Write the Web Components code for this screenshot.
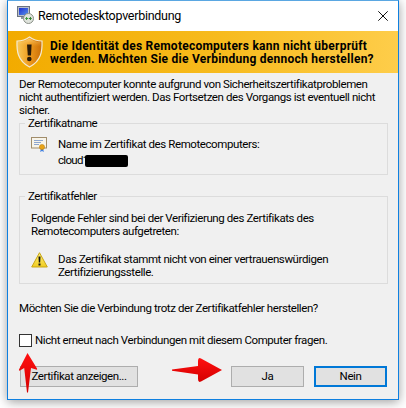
<!DOCTYPE html>
<html><head><meta charset="utf-8"><style>
html,body{margin:0;padding:0;background:#fff}
body{width:406px;height:408px;overflow:hidden;font:11.5px/13px Roboto,sans-serif;letter-spacing:-.41px;color:#000;white-space:nowrap}
</style></head><body>
<rd-dialog>
<span slot="title">Remotedesktopverbindung</span>
<rd-banner>Die Identität des Remotecomputers kann nicht überprüft<br>werden. Möchten Sie die Verbindung dennoch herstellen?</rd-banner>
<rd-text class="intro">Der Remotecomputer konnte aufgrund von Sicherheitszertifikatproblemen<br>nicht authentifiziert werden. Das Fortsetzen des Vorgangs ist eventuell nicht<br>sicher.</rd-text>
<rd-group label="Zertifikatname" h="58">
<rd-iconrow icon="cert">Name im Zertifikat des Remotecomputers:<br><rd-host>cloud1<rd-redact></rd-redact></rd-host></rd-iconrow>
</rd-group>
<rd-group label="Zertifikatfehler" h="94" style="margin-top:15px">
<rd-text style="margin-top:9px">Folgende Fehler sind bei der Verifizierung des Zertifikats des<br>Remotecomputers aufgetreten:</rd-text>
<rd-iconrow icon="warn" style="margin-top:13px">Das Zertifikat stammt nicht von einer vertrauenswürdigen<br>Zertifizierungsstelle.</rd-iconrow>
</rd-group>
<rd-text class="q">Möchten Sie die Verbindung trotz der Zertifikatfehler herstellen?</rd-text>
<rd-check>Nicht erneut nach Verbindungen mit diesem Computer fragen.</rd-check>
<rd-footer>
<rd-button w="118">Zertifikat anzeigen...</rd-button>
<rd-button w="73" style="margin-left:auto">Ja</rd-button>
<rd-button w="73" primary style="margin-left:10px">Nein</rd-button>
</rd-footer>
</rd-dialog>
<script>
const def=(n,css,html)=>{customElements.define(n,class extends HTMLElement{connectedCallback(){
 if(this.shadowRoot)return;const s=this.attachShadow({mode:'open'});
 s.innerHTML='<style>'+css+'</style>'+(typeof html==='function'?html(this):html);}})};
def('rd-dialog',`
:host{display:block;position:relative;width:406px;height:408px}
.win{position:absolute;left:7px;top:0;width:390px;height:398px;border:1px solid #0f80e0;border-top-color:#5aa7e2;background:#f0f0f0;box-shadow:0 2px 10px rgba(0,0,0,.38);display:flex;flex-direction:column}
.tb{height:30px;background:#fff;display:flex;align-items:center;padding-left:9px;flex:none;font-size:12.5px;letter-spacing:-.27px;color:#000}
.tb svg.ic{margin-right:4px}
.tb span{flex:1;margin-top:-1px;display:block}
.tb .x{margin-right:10px;margin-top:-1px}
.body{display:flex;flex-direction:column;flex:1}
.over{position:absolute;left:0;top:0;pointer-events:none}
`,`<div class="win"><div class="tb">
<svg class="ic" width="17" height="18" viewBox="0 0 17 18" style="margin-top:-2px">
<defs><linearGradient id="sc" x1="0" y1="0" x2="1" y2="1"><stop offset="0" stop-color="#1b2fd0"/><stop offset="1" stop-color="#5a90e8"/></linearGradient></defs>
<rect x=".5" y=".5" width="12" height="10" fill="#b9c0ca" stroke="#6b7380"/><rect x="2" y="2" width="9" height="7" fill="url(#sc)"/>
<rect x="4" y="11" width="5" height="2" fill="#8f96a0"/>
<circle cx="11.5" cy="12.5" r="5" fill="#dfe3dc" stroke="#8a9088"/>
<path d="M8.8 12.5h2.2M10 11l-1.3 1.5L10 14" fill="none" stroke="#3a9a3a" stroke-width="1"/><path d="M11.8 12.5h2.4M13 11l1.3 1.5L13 14" fill="none" stroke="#2f7f2f" stroke-width="1"/></svg>
<span><slot name="title"></slot></span>
<svg class="x" width="10" height="10" viewBox="0 0 10 10"><path d="M.3.3l9.4 9.4M9.7.3L.3 9.7" stroke="#111" stroke-width="1" fill="none"/></svg>
</div><div class="body"><slot></slot></div></div>
<svg class="over" width="406" height="408" viewBox="0 0 406 408">
<defs><linearGradient id="ra" x1="0" y1="0" x2="0" y2="1"><stop offset="0" stop-color="#ff1010"/><stop offset="1" stop-color="#d40000"/></linearGradient></defs>
<path d="M27.500 353L37 368.500Q37.500 370 36 369.600L31 368L28 392.500L27 392.500L24.200 368L20 370.500Q18.500 371 19 369.500Z" fill="url(#ra)"/>
<path d="M172 369.500L198 366L198 361Q198 357 201 358.500L222 370L201 381.500Q198 383 198 379L198 374.500L172 370.800Z" fill="url(#ra)"/>
</svg>`);
def('rd-banner',`:host{display:block;height:42px;box-sizing:border-box;background:linear-gradient(90deg,#f2ab00,#f7bb1e 55%,#fecd4a);font-weight:700;font-size:12px;letter-spacing:.25px;padding:9px 0 0 42px;position:relative;color:#000;line-height:13px;flex:none}
svg{position:absolute;left:8px;top:5px}`,`<svg width="27" height="32" viewBox="0 0 27 32">
<defs><linearGradient id="sh" x1="0" y1="0" x2="1" y2="0"><stop offset="0" stop-color="#f8c95a"/><stop offset=".5" stop-color="#ee9a1c"/><stop offset="1" stop-color="#c96d08"/></linearGradient>
<linearGradient id="sh2" x1="0" y1="0" x2="0" y2="1"><stop offset="0" stop-color="#ffe9a8" stop-opacity=".6"/><stop offset=".55" stop-color="#ffb030" stop-opacity="0"/></linearGradient></defs>
<path d="M13.5 1C10 3.6 5.5 5 1 5c-.4 9.500.5 20 12.500 26C25.500 25 26.400 14.500 26 5c-4.500 0-9-1.400-12.500-4z" fill="url(#sh)" stroke="#f4ead2" stroke-width="1.200"/>
<path d="M13.500 2.500C10 5 6 6 2.500 6.200c0 4 .2 7.800 1.800 11.300C9 15 18 15 23 17c1.400-3.500 1.600-7 1.500-10.800C21 6 17 5 13.500 2.500z" fill="url(#sh2)"/>
<path d="M11 8.500h4.600l-.6 11h-3.200z" fill="#2a1a08"/><ellipse cx="13.300" cy="23" rx="2.300" ry="2.200" fill="#2a1a08"/></svg><slot></slot>`);
def('rd-text',`:host{display:block}
:host(.intro){margin:5px 10px 0 11px;height:39px;flex:none}
:host(.q){margin:18px 10px 0 11px;flex:none}`,`<slot></slot>`);
def('rd-group',`:host{display:block;margin:0 10px 0 11px;flex:none;position:relative}
fieldset{margin:0;padding:0 11px;border:1px solid #dcdcdc;box-sizing:border-box;min-width:0;position:relative}
legend{padding:0 3px;margin-left:-6px;line-height:13px}
`,h=>`<fieldset style="height:${h.getAttribute('h')}px"><legend>${h.getAttribute('label')}</legend><slot></slot></fieldset>`);
def('rd-iconrow',`:host{display:flex;margin-top:6px;align-items:flex-start}
.i{width:27px;flex:none;height:26px}
.t{display:block;padding-top:2px}
svg{display:block}`,h=>{
 const cert=`<svg width="16" height="16" viewBox="0 0 16 16" style="margin-top:1px"><rect x=".5" y=".5" width="15" height="10.500" fill="#f7f4ea" stroke="#a18d6b"/><path d="M3 3.500h9M3 5.500h7M3 7.500h5" stroke="#8ea6cf" stroke-width="1"/><path d="M10 11l-.8 4 1.800-1 1.800 1-.8-4z" fill="#3f7fe0"/><circle cx="11" cy="10" r="2.600" fill="#e8a317" stroke="#b87a0c" stroke-width=".5"/></svg>`;
 const warn=`<svg width="17" height="16" viewBox="0 0 17 16" style="margin-top:1px"><defs><linearGradient id="w" x1="0" y1="0" x2="0" y2="1"><stop offset="0" stop-color="#fff07a"/><stop offset="1" stop-color="#f0cc20"/></linearGradient></defs><path d="M8.500 .7L16.300 15H.7z" fill="url(#w)" stroke="#c9a514" stroke-linejoin="round"/><path d="M7.500 4.500h2l-.3 6H7.800z" fill="#111"/><rect x="7.500" y="11.500" width="2" height="2" fill="#111"/></svg>`;
 return `<div class="i">${h.getAttribute('icon')==='cert'?cert:warn}</div><div class="t"><slot></slot></div>`});
def('rd-host',`:host{display:inline-flex;align-items:center;margin-top:3px;letter-spacing:-.7px}`,`<slot></slot>`);
def('rd-redact',`:host{display:block;width:43px;height:12px;background:#000;border-radius:2px;margin-left:-3px}`,``);
def('rd-check',`:host{display:flex;align-items:center;margin:19px 0 0 11px;height:13px;flex:none}
.b{width:11px;height:11px;border:1px solid #333;background:#fff;margin-right:3px;flex:none}`,`<div class="b"></div><slot></slot>`);
def('rd-footer',`:host{display:flex;margin:19px 11px 0 12px;flex:none}`,`<slot></slot>`);
def('rd-button',`:host{display:flex;align-items:center;justify-content:center;height:21px;box-sizing:border-box;background:#e1e1e1;border:1px solid #adadad;flex:none}
:host([primary]){border:2px solid #0078d7}`,`<slot></slot>`);
document.querySelectorAll('rd-button').forEach(b=>b.style.width=b.getAttribute('w')+'px');
</script>
</body></html>
